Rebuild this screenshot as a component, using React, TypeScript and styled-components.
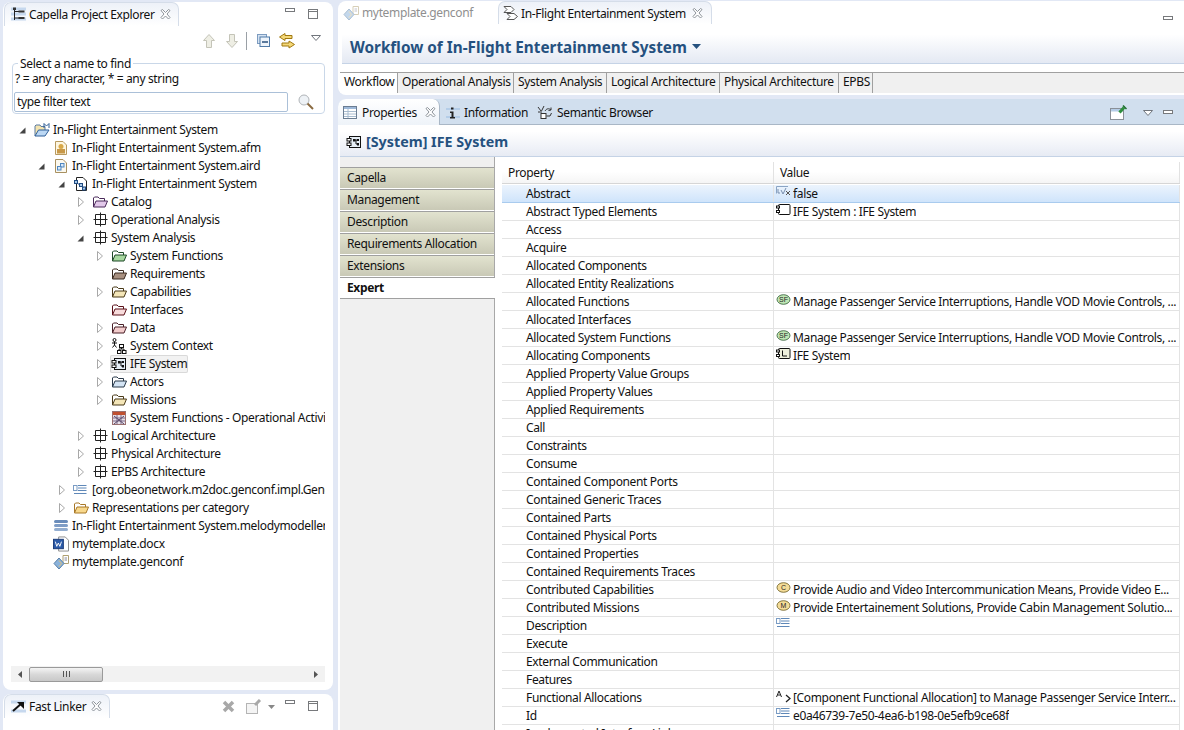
import * as React from 'react';
import styled, { createGlobalStyle } from 'styled-components';

const GlobalStyle = createGlobalStyle`
  html, body {
    margin: 0;
    padding: 0;
    height: 100%;
    overflow: hidden;
    background: #e2e8f5;
  }
  body {
    font-family: "Noto Sans", "Open Sans", sans-serif;
    font-size: 12px;
    letter-spacing: -0.35px;
    color: #111;
  }
`;

type IconName =
  | 'project' | 'afm' | 'aird' | 'model' | 'grid' | 'context' | 'comp' | 'matrix'
  | 'list' | 'stack' | 'word' | 'genconf';

interface TreeItem {
  level: number;
  arrow?: 'open' | 'closed';
  icon?: IconName;
  folder?: [string, string];
  label: string;
  selected?: boolean;
}

const PURPLE: [string, string] = ['#e2c8ea', '#4a2a5a'];
const GREEN: [string, string] = ['#a8d8a0', '#1f4a28'];
const BROWN: [string, string] = ['#a89080', '#3a2a20'];
const TAN: [string, string] = ['#f4e6b8', '#4a3a18'];
const RED: [string, string] = ['#f8dcdc', '#5a1018'];
const PINK: [string, string] = ['#f2cccc', '#4a2028'];
const BLUE: [string, string] = ['#d4e4f4', '#2a3a4a'];
const ORANGE: [string, string] = ['#f8d88c', '#a87828'];

const TREE: TreeItem[] = [
  { level: 0, arrow: 'open', icon: 'project', label: 'In-Flight Entertainment System' },
  { level: 1, icon: 'afm', label: 'In-Flight Entertainment System.afm' },
  { level: 1, arrow: 'open', icon: 'aird', label: 'In-Flight Entertainment System.aird' },
  { level: 2, arrow: 'open', icon: 'model', label: 'In-Flight Entertainment System' },
  { level: 3, arrow: 'closed', folder: PURPLE, label: 'Catalog' },
  { level: 3, arrow: 'closed', icon: 'grid', label: 'Operational Analysis' },
  { level: 3, arrow: 'open', icon: 'grid', label: 'System Analysis' },
  { level: 4, arrow: 'closed', folder: GREEN, label: 'System Functions' },
  { level: 4, folder: BROWN, label: 'Requirements' },
  { level: 4, arrow: 'closed', folder: TAN, label: 'Capabilities' },
  { level: 4, folder: RED, label: 'Interfaces' },
  { level: 4, arrow: 'closed', folder: PINK, label: 'Data' },
  { level: 4, arrow: 'closed', icon: 'context', label: 'System Context' },
  { level: 4, arrow: 'closed', icon: 'comp', label: 'IFE System', selected: true },
  { level: 4, arrow: 'closed', folder: BLUE, label: 'Actors' },
  { level: 4, arrow: 'closed', folder: TAN, label: 'Missions' },
  { level: 4, icon: 'matrix', label: 'System Functions - Operational Activities' },
  { level: 3, arrow: 'closed', icon: 'grid', label: 'Logical Architecture' },
  { level: 3, arrow: 'closed', icon: 'grid', label: 'Physical Architecture' },
  { level: 3, arrow: 'closed', icon: 'grid', label: 'EPBS Architecture' },
  { level: 2, arrow: 'closed', icon: 'list', label: '[org.obeonetwork.m2doc.genconf.impl.GenconfImpl]' },
  { level: 2, arrow: 'closed', folder: ORANGE, label: 'Representations per category' },
  { level: 1, icon: 'stack', label: 'In-Flight Entertainment System.melodymodeller' },
  { level: 1, icon: 'word', label: 'mytemplate.docx' },
  { level: 1, icon: 'genconf', label: 'mytemplate.genconf' },
];

type ValueIcon = 'bool' | 'part' | 'sf' | 'logical' | 'cap' | 'mis' | 'text' | 'alloc';

const ROWS: { name: string; icon?: ValueIcon; value?: string }[] = [
  { name: 'Abstract', icon: 'bool', value: 'false' },
  { name: 'Abstract Typed Elements', icon: 'part', value: 'IFE System : IFE System' },
  { name: 'Access' },
  { name: 'Acquire' },
  { name: 'Allocated Components' },
  { name: 'Allocated Entity Realizations' },
  { name: 'Allocated Functions', icon: 'sf', value: 'Manage Passenger Service Interruptions, Handle VOD Movie Controls, ...' },
  { name: 'Allocated Interfaces' },
  { name: 'Allocated System Functions', icon: 'sf', value: 'Manage Passenger Service Interruptions, Handle VOD Movie Controls, ...' },
  { name: 'Allocating Components', icon: 'logical', value: 'IFE System' },
  { name: 'Applied Property Value Groups' },
  { name: 'Applied Property Values' },
  { name: 'Applied Requirements' },
  { name: 'Call' },
  { name: 'Constraints' },
  { name: 'Consume' },
  { name: 'Contained Component Ports' },
  { name: 'Contained Generic Traces' },
  { name: 'Contained Parts' },
  { name: 'Contained Physical Ports' },
  { name: 'Contained Properties' },
  { name: 'Contained Requirements Traces' },
  { name: 'Contributed Capabilities', icon: 'cap', value: 'Provide Audio and Video Intercommunication Means, Provide Video E...' },
  { name: 'Contributed Missions', icon: 'mis', value: 'Provide Entertainement Solutions, Provide Cabin Management Solutio...' },
  { name: 'Description', icon: 'text' },
  { name: 'Execute' },
  { name: 'External Communication' },
  { name: 'Features' },
  { name: 'Functional Allocations', icon: 'alloc', value: '[Component Functional Allocation] to Manage Passenger Service Interr...' },
  { name: 'Id', icon: 'text', value: 'e0a46739-7e50-4ea6-b198-0e5efb9ce68f' },
  { name: 'Implemented Interface Links' },
];

const SIDE_TABS = ['Capella', 'Management', 'Description', 'Requirements Allocation', 'Extensions', 'Expert'];
const PAGE_TABS = [
  { label: 'Workflow', width: 58 },
  { label: 'Operational Analysis', width: 116 },
  { label: 'System Analysis', width: 93 },
  { label: 'Logical Architecture', width: 113 },
  { label: 'Physical Architecture', width: 119 },
  { label: 'EPBS', width: 34 },
];

function CloseIcon() {
  return (
    <svg width="11" height="11" viewBox="0 0 11 11">
      <path
        d="M1 1.500 L2.500 .5 L5.500 3.500 L8.500 .5 L10 1.500 L7 5 L10 8.500 L8.500 10 L5.500 7 L2.500 10 L1 8.500 L4 5 Z"
        fill="#fff"
        stroke="#8c9299"
        strokeWidth="1"
      />
    </svg>
  );
}

function MinIcon() {
  return (
    <svg width="10" height="5" viewBox="0 0 10 5">
      <rect x=".5" y=".5" width="9" height="3" fill="#fff" stroke="#77797c" />
    </svg>
  );
}

function MaxIcon() {
  return (
    <svg width="10" height="10" viewBox="0 0 10 10">
      <rect x=".5" y=".5" width="9" height="9" fill="#fff" stroke="#77797c" />
      <line x1="0" y1="2.500" x2="10" y2="2.500" stroke="#77797c" />
    </svg>
  );
}

function MenuTriangle() {
  return (
    <svg width="10" height="6" viewBox="0 0 10 6">
      <path d="M.5 .5 H9.500 L5 5.500 Z" fill="#fff" stroke="#70757c" />
    </svg>
  );
}

function Folder({ colors }: { colors: [string, string] }) {
  return (
    <svg width="16" height="16" viewBox="0 0 16 16">
      <path d="M1.500 13 V4 L2.500 3 H6 L7.500 4.500 H12.500 V7" fill="#fff" stroke={colors[1]} />
      <path d="M1.500 13 L4 7 H15.500 L13 13 Z" fill={colors[0]} stroke={colors[1]} strokeLinejoin="round" />
    </svg>
  );
}

function TreeIcon({ name }: { name: IconName }) {
  switch (name) {
    case 'project':
      return (
        <svg width="16" height="16" viewBox="0 0 16 16">
          <path d="M1 14 V4 L2 3 H6 L7 4.500 H11 V8" fill="#f4e4b0" stroke="#5a7aa0" />
          <path d="M1 14 L4.500 8 H15 L11 14 Z" fill="#bcd8f4" stroke="#2f5f98" />
          <path d="M10 6 V1.500 L12.500 4 L15 1.500 V6" fill="none" stroke="#2f5f98" />
        </svg>
      );
    case 'afm':
      return (
        <svg width="16" height="16" viewBox="0 0 16 16">
          <path d="M2.500 1.500 H10 L13.500 5 V14.500 H2.500 Z" fill="#fdf6e0" stroke="#b89a60" />
          <circle cx="8" cy="6.500" r="2.500" fill="#d8a848" />
          <rect x="4" y="9" width="8" height="4.500" fill="#c89848" />
        </svg>
      );
    case 'aird':
      return (
        <svg width="16" height="16" viewBox="0 0 16 16">
          <path d="M2.500 1.500 H10 L13.500 5 V14.500 H2.500 Z" fill="#fbf8ee" stroke="#a89060" />
          <rect x="7.500" y="5.500" width="3.500" height="3.500" fill="#d8e8f8" stroke="#4f86bf" />
          <rect x="4.500" y="8.500" width="3.500" height="3.500" fill="#d8e8f8" stroke="#4f86bf" />
        </svg>
      );
    case 'model':
      return (
        <svg width="16" height="16" viewBox="0 0 16 16">
          <path d="M3.500 1.500 H10 L13.500 5 V14.500 H3.500 Z" fill="#fff" stroke="#222" />
          <rect x="1.500" y="4.500" width="3" height="3" fill="#a8c8e8" stroke="#204a80" />
          <rect x="6.500" y="7.500" width="3" height="3" fill="#a8c8e8" stroke="#204a80" />
          <rect x="9.500" y="11" width="3" height="3" fill="#a8c8e8" stroke="#204a80" />
          <path d="M4 7 L7 9 M9 10 L10.500 11.500" stroke="#204a80" />
        </svg>
      );
    case 'grid':
      return (
        <svg width="16" height="16" viewBox="0 0 16 16">
          <path d="M3.500 2.500 H13.500 V12.500 H3.500 Z M8.500 .5 V14.500 M1.500 7.500 H15.500" fill="none" stroke="#222" />
        </svg>
      );
    case 'context':
      return (
        <svg width="16" height="16" viewBox="0 0 16 16">
          <circle cx="3.500" cy="2" r="1.500" fill="none" stroke="#111" />
          <path d="M1 5 H6 M3.500 3.500 V7 L1.500 9.500 M3.500 7 L5.500 9.500" fill="none" stroke="#111" />
          <rect x="8.500" y="6.500" width="4" height="3" fill="#fff" stroke="#111" />
          <rect x="6.500" y="12.500" width="3.500" height="3" fill="#fff" stroke="#111" />
          <rect x="11.500" y="12.500" width="3.500" height="3" fill="#fff" stroke="#111" />
          <path d="M10.500 9.500 V11 M8 12.500 V11 H13 V12.500" fill="none" stroke="#111" />
        </svg>
      );
    case 'comp':
      return <CompIcon />;
    case 'matrix':
      return (
        <svg width="16" height="16" viewBox="0 0 16 16">
          <rect x="1.500" y="1.500" width="13" height="13" fill="#e8e0e8" stroke="#9a7070" />
          <rect x="2" y="2" width="12" height="3" fill="#c05030" />
          <path d="M2 8 H14 M2 11 H14 M6 5 V14 M10 5 V14" stroke="#7a6a8a" />
          <path d="M3 6 L13 14 M13 6 L3 14" stroke="#5a4a6a" />
        </svg>
      );
    case 'list':
      return <TextLinesIcon />;
    case 'stack':
      return (
        <svg width="16" height="16" viewBox="0 0 16 16">
          <rect x="1" y="2" width="14" height="3" rx="1.500" fill="#6a8cba" />
          <rect x="1" y="6" width="14" height="3" rx="1.500" fill="#7f9dc6" />
          <rect x="1" y="10" width="14" height="3" rx="1.500" fill="#94aed0" />
        </svg>
      );
    case 'word':
      return (
        <svg width="17" height="16" viewBox="0 0 17 16">
          <path d="M6 .5 H13 L16.500 4 V15.500 H6 Z" fill="#fff" stroke="#8a8a8a" />
          <rect x=".5" y="3" width="10.500" height="10" fill="#2b5aa8" stroke="#1a3a78" />
          <path d="M2.500 5.500 L4 10.500 L5.700 7 L7.300 10.500 L9 5.500" fill="none" stroke="#fff" />
        </svg>
      );
    case 'genconf':
      return <GenconfIcon />;
  }
}

function CompIcon() {
  return (
    <svg width="16" height="16" viewBox="0 0 16 16">
      <rect x="3.500" y="2.500" width="11" height="11" fill="#e6eef6" stroke="#111" />
      <rect x="1" y="4.500" width="4" height="2.500" fill="#fff" stroke="#111" />
      <rect x="1" y="9" width="4" height="2.500" fill="#fff" stroke="#111" />
      <rect x="7" y="5" width="2.500" height="2.500" fill="#111" />
      <rect x="11" y="5" width="2" height="2" fill="#111" />
      <rect x="11" y="9" width="2" height="2.500" fill="#111" />
      <path d="M9 6 H11 M10 6 V10 H11" stroke="#111" fill="none" />
    </svg>
  );
}

function GenconfIcon({ muted }: { muted?: boolean }) {
  return (
    <svg width="16" height="16" viewBox="0 0 16 16" opacity={muted ? 0.5 : 1}>
      <path d="M10 1.500 H15.500 V9.500 H10 Z" fill="#fff" stroke="#b0a070" />
      <path d="M11.500 4 H14 M11.500 6 H14" stroke="#889" />
      <path d="M6 4 L11 9.500 L6 15 L1 9.500 Z" fill="#8ab2da" stroke="#5a80a8" />
      <path d="M6 6.500 L8.500 9.500 L6 12.500" fill="none" stroke="#e8c070" />
    </svg>
  );
}

function TextLinesIcon() {
  return (
    <svg width="14" height="10" viewBox="0 0 14 10">
      <rect x=".5" y=".5" width="3.500" height="5" fill="#fff" stroke="#7a9cc4" />
      <path d="M5 .5 H13.500 M5 3 H13.500 M5 5.500 H13.500 M1 8.500 H13.500" stroke="#5f88b8" />
    </svg>
  );
}

function CircleBadge({ label, fill, stroke }: { label: string; fill: string; stroke: string }) {
  return (
    <svg width="15" height="11" viewBox="0 0 15 11">
      <ellipse cx="7.500" cy="5.500" rx="6.500" ry="4.800" fill={fill} stroke={stroke} strokeWidth=".8" />
      <text x="7.500" y="8" textAnchor="middle" fontSize="7" letterSpacing="0" fontFamily="Liberation Sans" fill="#222">{label}</text>
    </svg>
  );
}

function RowIcon({ name }: { name: ValueIcon }) {
  switch (name) {
    case 'bool':
      return (
        <svg width="15" height="11" viewBox="0 0 15 11">
          <path d="M.5 7.500 V.5 H12" fill="none" stroke="#8aa4c4" />
          <path d="M2 3 V7 H4 M5 4 L7 8 L10 2" fill="none" stroke="#7a90b0" />
          <path d="M10 5 L14 9 M14 5 L10 9" stroke="#555" />
        </svg>
      );
    case 'part':
      return (
        <svg width="15" height="12" viewBox="0 0 15 12">
          <rect x="2.500" y=".5" width="11.500" height="10" rx="1" fill="#fff" stroke="#111" />
          <rect x=".5" y="2" width="3" height="2" fill="#fff" stroke="#111" />
          <rect x=".5" y="6.500" width="3" height="2" fill="#fff" stroke="#111" />
        </svg>
      );
    case 'logical':
      return (
        <svg width="15" height="12" viewBox="0 0 15 12">
          <rect x="2.500" y=".5" width="11.500" height="10" rx="1" fill="#eef0dc" stroke="#111" />
          <rect x=".5" y="2" width="3" height="2" fill="#fff" stroke="#111" />
          <rect x=".5" y="6.500" width="3" height="2" fill="#fff" stroke="#111" />
          <path d="M6.500 2.500 V8 H11" fill="none" stroke="#111" />
        </svg>
      );
    case 'sf':
      return <CircleBadge label="SF" fill="#bfe6b4" stroke="#2f5a34" />;
    case 'cap':
      return <CircleBadge label="C" fill="#f4dc98" stroke="#6a5a20" />;
    case 'mis':
      return <CircleBadge label="M" fill="#f4dc98" stroke="#6a5a20" />;
    case 'text':
      return <TextLinesIcon />;
    case 'alloc':
      return (
        <svg width="15" height="13" viewBox="0 0 15 13">
          <path d="M.5 7 L3 1 L5.500 7 M1.500 5 H4.500" fill="none" stroke="#222" />
          <path d="M10 5 L14 8.500 L10 12" fill="none" stroke="#222" strokeWidth="1.300" />
        </svg>
      );
  }
}

function TreeArrow({ kind }: { kind?: 'open' | 'closed' }) {
  if (kind === 'open') {
    return (
      <svg width="7" height="7" viewBox="0 0 7 7">
        <path d="M6.500 .5 V6.500 H.5 Z" fill="#444" />
      </svg>
    );
  }
  if (kind === 'closed') {
    return (
      <svg width="6" height="10" viewBox="0 0 6 10">
        <path d="M.5 .5 L5.500 5 L.5 9.500 Z" fill="#fff" stroke="#a8a8a8" />
      </svg>
    );
  }
  return null;
}

function App() {
  return (
    <>
      <GlobalStyle />
      <Screen>
        <LeftColumn>
          <ExplorerPanel>
            <ViewHeader>
              <ViewTab>
                <svg width="15" height="15" viewBox="0 0 15 15">
                  <path d="M0 2 H15 M0 7 H15 M0 12 H15" stroke="#c6d8ee" strokeWidth="3" />
                  <path d="M3.500 1 V13 M3.500 4.500 H8 M3.500 11 H8" stroke="#222" fill="none" />
                  <rect x="2" y=".5" width="3" height="2.500" fill="#333" />
                  <rect x="7.500" y="3.500" width="6" height="2" fill="#333" />
                  <rect x="7.500" y="10" width="6" height="2" fill="#333" />
                </svg>
                <span>Capella Project Explorer</span>
                <CloseIcon />
              </ViewTab>
              <WindowTools>
                <MinIcon />
                <MaxIcon />
              </WindowTools>
            </ViewHeader>
            <ExplorerToolbar>
              <svg width="12" height="14" viewBox="0 0 12 14">
                <path d="M6 .5 L11.500 6.500 H8.500 V13.500 H3.500 V6.500 H.5 Z" fill="#eeeee4" stroke="#c4c4b8" />
              </svg>
              <svg width="12" height="14" viewBox="0 0 12 14">
                <path d="M6 13.500 L11.500 7.500 H8.500 V.5 H3.500 V7.500 H.5 Z" fill="#eeeee4" stroke="#c4c4b8" />
              </svg>
              <ToolbarSeparator />
              <svg width="13" height="13" viewBox="0 0 13 13">
                <rect x=".5" y=".5" width="9" height="9" fill="#d4e2f2" stroke="#7d9cc0" />
                <rect x="3" y="3" width="9.500" height="9.500" fill="#eef4fb" stroke="#4f7aa8" />
                <path d="M5 8 H11" stroke="#28507c" strokeWidth="1.300" />
              </svg>
              <LinkToggle>
                <svg width="16" height="16" viewBox="0 0 16 16">
                  <path d="M6 .5 L.5 4 L6 7.500 V5.500 H13 V2.500 H6 Z" fill="#f4d878" stroke="#a07810" />
                  <path d="M10 8 L15.500 11.500 L10 15 V13 H3 V10 H10 Z" fill="#f4d878" stroke="#a07810" />
                </svg>
              </LinkToggle>
              <ToolbarMenu>
                <MenuTriangle />
              </ToolbarMenu>
            </ExplorerToolbar>
            <FindGroup>
              <FindLegend>Select a name to find</FindLegend>
              <FindHint>? = any character, * = any string</FindHint>
              <FindRow>
                <FindInput>type filter text</FindInput>
                <svg width="16" height="16" viewBox="0 0 16 16">
                  <circle cx="6" cy="6" r="5" fill="#eef2f6" stroke="#b0b4b8" />
                  <path d="M9.500 9.500 L15 15" stroke="#8a6a40" strokeWidth="2" />
                </svg>
              </FindRow>
            </FindGroup>
            <Tree>
              {TREE.map((item, i) => (
                <TreeRow key={i} $level={item.level}>
                  <ArrowSlot>
                    <TreeArrow kind={item.arrow} />
                  </ArrowSlot>
                  <TreeLabelWrap $selected={item.selected}>
                    <IconSlot>
                      {item.folder ? <Folder colors={item.folder} /> : <TreeIcon name={item.icon as IconName} />}
                    </IconSlot>
                    <TreeLabel>{item.label}</TreeLabel>
                  </TreeLabelWrap>
                </TreeRow>
              ))}
            </Tree>
            <Scrollbar>
              <ScrollEnd>
                <svg width="4" height="7" viewBox="0 0 4 7">
                  <path d="M4 0 V7 L0 3.500 Z" fill="#555" />
                </svg>
              </ScrollEnd>
              <ScrollThumb>
                <ThumbGrip />
              </ScrollThumb>
              <ScrollEnd>
                <svg width="4" height="7" viewBox="0 0 4 7">
                  <path d="M0 0 V7 L4 3.500 Z" fill="#555" />
                </svg>
              </ScrollEnd>
            </Scrollbar>
          </ExplorerPanel>
          <LinkerPanel>
            <ViewHeader>
              <ViewTab>
                <svg width="15" height="15" viewBox="0 0 15 15">
                  <path d="M0 3 H15 M0 12 H15" stroke="#c6d8ee" strokeWidth="3" />
                  <path d="M2 12 L11 4" stroke="#111" strokeWidth="2" />
                  <path d="M6 3 H13 V10 Z" fill="#111" />
                </svg>
                <span>Fast Linker</span>
                <CloseIcon />
              </ViewTab>
              <LinkerTools>
                <svg width="13" height="13" viewBox="0 0 13 13">
                  <path d="M2 2 L11 11 M11 2 L2 11" stroke="#a8a8a8" strokeWidth="3.500" />
                </svg>
                <svg width="16" height="15" viewBox="0 0 16 15">
                  <rect x=".5" y="4.500" width="11" height="10" fill="#f4f4f4" stroke="#b4b4b4" />
                  <path d="M9 6 L14 1" stroke="#a8a8a8" strokeWidth="3" />
                </svg>
                <svg width="7" height="4" viewBox="0 0 7 4">
                  <path d="M0 0 H7 L3.500 4 Z" fill="#888" />
                </svg>
              </LinkerTools>
              <WindowTools>
                <MinIcon />
                <MaxIcon />
              </WindowTools>
            </ViewHeader>
          </LinkerPanel>
        </LeftColumn>
        <RightColumn>
          <EditorPanel>
            <EditorTabs>
              <MutedTab>
                <GenconfIcon muted />
                <span>mytemplate.genconf</span>
              </MutedTab>
              <EditorTab>
                <svg width="16" height="16" viewBox="0 0 16 16">
                  <path d="M1 1.500 H8 L11 4.500 L8 7.500 H1 L4 4.500 Z" fill="#fff" stroke="#555" />
                  <path d="M4 8.500 H11 L14.500 11.500 L11 14.500 H4 L7 11.500 Z" fill="#fff" stroke="#555" />
                </svg>
                <span>In-Flight Entertainment System</span>
                <CloseIcon />
              </EditorTab>
              <EditorTools>
                <MinIcon />
              </EditorTools>
            </EditorTabs>
            <WorkflowTitle>
              <span>Workflow of In-Flight Entertainment System</span>
              <svg width="9" height="5" viewBox="0 0 9 5">
                <path d="M0 0 H9 L4.500 5 Z" fill="#26527f" />
              </svg>
            </WorkflowTitle>
            <PageTabs>
              {PAGE_TABS.map((tab, i) => (
                <PageTab key={tab.label} $active={i === 0} $width={tab.width}>{tab.label}</PageTab>
              ))}
            </PageTabs>
          </EditorPanel>
          <PropertiesPanel>
            <PropertiesTabs>
              <PropertiesTab>
                <svg width="14" height="13" viewBox="0 0 14 13">
                  <rect x=".5" y=".5" width="13" height="12" fill="#fff" stroke="#6b7d92" />
                  <rect x="1" y="1" width="12" height="2" fill="#9db8d8" />
                  <path d="M1 5.500 H13 M1 8 H13 M1 10.500 H13 M5 3 V12" stroke="#a8bcd0" />
                </svg>
                <span>Properties</span>
                <CloseIcon />
              </PropertiesTab>
              <PlainTab>
                <svg width="14" height="14" viewBox="0 0 14 14">
                  <path d="M0 3 H14 M0 11 H14" stroke="#b4cde8" strokeWidth="2" />
                  <rect x="5" y="1.500" width="2.500" height="2" fill="#222" />
                  <path d="M4 5.500 H7.500 V11 H9 V12.500 H4 V11 H5.500 V7 H4 Z" fill="#222" />
                </svg>
                <span>Information</span>
              </PlainTab>
              <PlainTab>
                <svg width="15" height="15" viewBox="0 0 15 15">
                  <path d="M1 2 L4 6 M1 7 H5 M7 1 L4.500 6" stroke="#333" fill="none" />
                  <rect x="4" y="8.500" width="5" height="5" fill="#fff" stroke="#333" />
                  <path d="M8 6 C9.500 3.500 12 3 14 5 M11.500 5.500 L14 5 L14 2.500 M9.500 11 H13 L14.500 8" stroke="#333" fill="none" />
                </svg>
                <span>Semantic Browser</span>
              </PlainTab>
              <PropertiesTools>
                <svg width="17" height="15" viewBox="0 0 17 15">
                  <rect x=".5" y="3.500" width="13" height="11" fill="#fff" stroke="#8a9098" />
                  <rect x="1" y="4" width="12" height="2.500" fill="#b4cce6" />
                  <path d="M9.500 7.500 L14 2.500" stroke="#2f8f3f" strokeWidth="3" />
                  <path d="M13 .5 L16.500 4" stroke="#1f6f2f" strokeWidth="1.500" />
                </svg>
                <TriangleGap>
                  <MenuTriangle />
                </TriangleGap>
                <MinIcon />
              </PropertiesTools>
            </PropertiesTabs>
            <PropertiesTitle>
              <CompIcon />
              <span>[System] IFE System</span>
            </PropertiesTitle>
            <PropertiesBody>
              <Sidebar>
                {SIDE_TABS.map((tab, i) => (
                  <SideTab key={tab} $active={i === SIDE_TABS.length - 1}>{tab}</SideTab>
                ))}
              </Sidebar>
              <TableArea>
                <TableHead>
                  <HeadCell>Property</HeadCell>
                  <HeadCell>Value</HeadCell>
                </TableHead>
                <HeadRule />
                {ROWS.map((row, i) => (
                  <PropertyRow key={row.name} $selected={i === 0}>
                    <NameCell>{row.name}</NameCell>
                    <ValueCell>
                      {row.icon && (
                        <ValueIconSlot>
                          <RowIcon name={row.icon} />
                        </ValueIconSlot>
                      )}
                      {row.value && <ValueText>{row.value}</ValueText>}
                    </ValueCell>
                  </PropertyRow>
                ))}
              </TableArea>
            </PropertiesBody>
          </PropertiesPanel>
        </RightColumn>
      </Screen>
    </>
  );
}

const Screen = styled.div`
  width: 1184px;
  height: 730px;
  overflow: hidden;
  display: flex;
  gap: 5px;
  background: #e2e8f5;
`;

const LeftColumn = styled.div`
  width: 330px;
  margin-left: 3px;
  padding-top: 2px;
  display: flex;
  flex-direction: column;
  gap: 4px;
  flex: none;
`;

const Panel = styled.section`
  background: #fff;
  border-radius: 8px;
  overflow: hidden;
`;

const ExplorerPanel = styled(Panel)`
  height: 688px;
  flex: none;
  display: flex;
  flex-direction: column;
`;

const LinkerPanel = styled(Panel)`
  flex: 1;
  border-bottom-left-radius: 0;
  border-bottom-right-radius: 0;
`;

const ViewHeader = styled.div`
  height: 24px;
  flex: none;
  display: flex;
  align-items: flex-start;
  padding-left: 1px;
`;

const ViewTab = styled.div`
  height: 23px;
  padding: 0 7px 0 6px;
  display: flex;
  align-items: center;
  gap: 3px;
  white-space: nowrap;
  border-radius: 7px 7px 0 0;
  border: 1px solid #d5dde9;
  border-bottom: none;
  background: linear-gradient(#edf1f8, #fff);

  svg {
    flex: none;
  }

  svg:last-child {
    margin-left: 2px;
  }
`;

const WindowTools = styled.div`
  display: flex;
  align-items: center;
  gap: 13px;
  margin-left: auto;
  margin-right: 15px;
  margin-top: 6px;
  height: 12px;

  svg:first-child {
    align-self: flex-start;
  }
`;

const LinkerTools = styled.div`
  display: flex;
  align-items: center;
  gap: 6px;
  margin-left: auto;
  margin-top: 5px;
  height: 15px;

  svg:first-child {
    margin-right: 5px;
  }

  & + ${WindowTools} {
    margin-left: 10px;
  }
`;

const ExplorerToolbar = styled.div`
  height: 37px;
  flex: none;
  display: flex;
  justify-content: flex-end;
  align-items: center;
  padding: 0 12px 8px 0;
  gap: 11px;
  box-sizing: border-box;
`;

const ToolbarSeparator = styled.span`
  width: 1px;
  height: 18px;
  margin: 0 -1px 0 -3px;
  background: #9aa0a6;
`;

const LinkToggle = styled.span`
  display: flex;
  margin-left: -2px;
`;

const ToolbarMenu = styled.span`
  display: flex;
  margin-left: 5px;
  align-self: flex-start;
  padding-top: 9px;
`;

const FindGroup = styled.fieldset`
  margin: 0 8px 0 9px;
  padding: 0 1px 2px 1px;
  height: 51px;
  flex: none;
  box-sizing: border-box;
  position: relative;
  border: 1px solid #c9d7e8;
  border-radius: 4px;
`;

const FindLegend = styled.div`
  position: absolute;
  top: -8px;
  left: 5px;
  padding: 0 2px;
  background: #fff;
  line-height: 16px;
`;

const FindHint = styled.div`
  padding: 7px 0 0 1px;
  line-height: 16px;
`;

const FindRow = styled.div`
  display: flex;
  align-items: center;
  gap: 10px;
  margin-top: 5px;
`;

const FindInput = styled.div`
  width: 274px;
  height: 20px;
  box-sizing: border-box;
  padding-left: 2px;
  border: 1px solid #abc0d8;
  border-radius: 2px;
  line-height: 18px;
`;

const Tree = styled.div`
  flex: 1;
  margin-top: 7px;
  padding-left: 13px;
  margin-right: 8px;
  overflow: hidden;
`;

const TreeRow = styled.div<{ $level: number }>`
  height: 18px;
  display: flex;
  align-items: center;
  padding-left: ${(p) => Math.round(p.$level * 19.25)}px;
  white-space: nowrap;
`;

const ArrowSlot = styled.span`
  width: 13px;
  flex: none;
  display: flex;
  justify-content: center;
`;

const TreeLabelWrap = styled.span<{ $selected?: boolean }>`
  display: flex;
  align-items: center;
  height: 18px;
  padding: 0 1px;
  margin-left: 4px;
  border-radius: 2px;
  box-sizing: border-box;
  background: ${(p) => (p.$selected ? '#f2f2f2' : 'transparent')};
  box-shadow: ${(p) => (p.$selected ? 'inset 0 0 0 1px #d9d9d9' : 'none')};
`;

const IconSlot = styled.span`
  width: 16px;
  height: 16px;
  flex: none;
  display: flex;
  align-items: center;
`;

const TreeLabel = styled.span`
  margin-left: 3px;
  line-height: 18px;
`;

const Scrollbar = styled.div`
  height: 16px;
  margin: 0 8px 8px 8px;
  flex: none;
  display: flex;
  align-items: center;
  background: #f2f2f2;
`;

const ScrollEnd = styled.span`
  width: 18px;
  flex: none;
  display: flex;
  justify-content: center;

  &:last-child {
    margin-left: auto;
  }
`;

const ScrollThumb = styled.div`
  width: 74px;
  height: 15px;
  box-sizing: border-box;
  border: 1px solid #9a9a9a;
  border-radius: 2px;
  background: linear-gradient(#f4f4f4, #d8d8d8 50%, #c8c8c8);
  display: flex;
  align-items: center;
  justify-content: center;
`;

const ThumbGrip = styled.span`
  width: 7px;
  height: 6px;
  background: repeating-linear-gradient(90deg, #555 0 1px, transparent 1px 3px);
`;

const RightColumn = styled.div`
  flex: 1;
  min-width: 0;
  padding-top: 1px;
  display: flex;
  flex-direction: column;
  gap: 4px;
`;

const EditorPanel = styled(Panel)`
  height: 94px;
  flex: none;
  border-top-right-radius: 0;
  border-bottom-right-radius: 0;
  display: flex;
  flex-direction: column;
`;

const EditorTabs = styled.div`
  height: 24px;
  flex: none;
  display: flex;
  align-items: flex-start;
  padding-left: 5px;
`;

const MutedTab = styled.div`
  width: 155px;
  height: 23px;
  display: flex;
  align-items: center;
  gap: 3px;
  color: #8f8f8f;
`;

const EditorTab = styled(ViewTab)`
  width: 214px;
  box-sizing: border-box;
  padding: 0 8px 0 4px;
  gap: 2px;

  svg:last-child {
    margin-left: auto;
  }
`;

const EditorTools = styled.div`
  margin-left: auto;
  margin-right: 11px;
  padding-top: 7px;
`;

const WorkflowTitle = styled.div`
  height: 39px;
  flex: none;
  box-sizing: border-box;
  padding: 5px 0 0 8px;
  margin-left: 4px;
  display: flex;
  align-items: center;
  gap: 5px;
  font-size: 15.3px;
  font-weight: 700;
  letter-spacing: 0;
  color: #25517f;
  background: linear-gradient(#fff 25%, #e4e9f3);
  border-bottom: 1px solid #c5d3e6;
`;

const PageTabs = styled.div`
  margin: 8px 0 0 2px;
  height: 21px;
  flex: none;
  display: flex;
  background: #f0f0f0;
  border-top: 1px solid #a0a0a0;
  box-sizing: border-box;
`;

const PageTab = styled.div<{ $active?: boolean; $width: number }>`
  width: ${(p) => p.$width}px;
  box-sizing: border-box;
  padding-left: 4px;
  line-height: 18px;
  height: 20px;
  white-space: nowrap;
  overflow: hidden;
  border-right: 1px solid #a0a0a0;
  background: ${(p) => (p.$active ? '#fff' : 'transparent')};
`;

const PropertiesPanel = styled(Panel)`
  flex: 1;
  min-height: 0;
  border-radius: 8px 0 0 0;
  display: flex;
  flex-direction: column;
`;

const PropertiesTabs = styled.div`
  height: 26px;
  flex: none;
  box-sizing: border-box;
  padding-top: 2px;
  display: flex;
  align-items: center;
  background: #d1dfee;
  border-bottom: 1px solid #a9b7c6;
`;

const PropertiesTab = styled.div`
  width: 102px;
  height: 26px;
  box-sizing: border-box;
  flex: none;
  margin-top: -2px;
  padding: 2px 0 0 5px;
  display: flex;
  align-items: center;
  gap: 5px;
  background: linear-gradient(#fff, #eef3f9);
  border-right: 1px solid #a9b7c6;
  border-radius: 7px 7px 0 0;

  svg:last-child {
    margin-left: 3px;
  }
`;

const PlainTab = styled.div`
  display: flex;
  align-items: center;
  gap: 4px;
  margin-left: 6px;

  & + & {
    margin-left: 9px;
    gap: 5px;
  }
`;

const PropertiesTools = styled.div`
  margin-left: auto;
  margin-right: 11px;
  display: flex;
  align-items: center;
`;

const TriangleGap = styled.span`
  margin: 0 10px 0 16px;
  display: flex;
`;

const PropertiesTitle = styled.div`
  height: 32px;
  flex: none;
  box-sizing: border-box;
  padding: 2px 0 0 6px;
  margin-left: 2px;
  display: flex;
  align-items: center;
  gap: 4px;
  font-size: 14.3px;
  font-weight: 700;
  letter-spacing: 0;
  color: #25517f;
  background: linear-gradient(#fff 20%, #e7ebf4);
  border-bottom: 1px solid #c5d3e6;
`;

const PropertiesBody = styled.div`
  flex: 1;
  min-height: 0;
  display: flex;
  overflow: hidden;
  margin-left: 2px;
`;

const Sidebar = styled.nav`
  width: 155px;
  flex: none;
  box-sizing: border-box;
  padding-top: 10px;
  background: #f0f0f0;
  border-right: 1px solid #a8a8a8;
`;

const SideTab = styled.div<{ $active?: boolean }>`
  height: 22px;
  box-sizing: border-box;
  padding-left: 7px;
  line-height: 19px;
  border-top: 1px solid #a0a0a0;
  border-bottom: 1px solid ${(p) => (p.$active ? '#a0a0a0' : '#fff')};
  background: ${(p) => (p.$active ? '#fff' : 'linear-gradient(#e2e3cf, #c9c9b6)')};
  font-weight: ${(p) => (p.$active ? 700 : 400)};
  margin-right: ${(p) => (p.$active ? '-1px' : '0')};
  position: relative;
`;

const TableArea = styled.div`
  width: 678px;
  flex: none;
  margin-left: 7px;
  padding-top: 5px;
`;

const TableHead = styled.div`
  height: 21px;
  display: grid;
  grid-template-columns: 272px 1fr;
  background: linear-gradient(#fff 45%, #f5f5f5);
  border-bottom: 1px solid #d6d6d6;
`;

const HeadCell = styled.div`
  padding: 3px 0 0 6px;
  line-height: 16px;
  border-right: 1px solid #e2e2e2;
`;

const HeadRule = styled.div`
  height: 1px;
`;

const PropertyRow = styled.div<{ $selected?: boolean }>`
  height: 18px;
  box-sizing: border-box;
  display: grid;
  grid-template-columns: 272px 1fr;
  border-bottom: 1px solid ${(p) => (p.$selected ? '#a9cbee' : '#e3e3e3')};
  background: ${(p) => (p.$selected ? 'linear-gradient(#ecf4fd, #cfe4fb)' : '#fff')};
  white-space: nowrap;
`;

const NameCell = styled.div`
  padding-left: 24px;
  line-height: 17px;
  border-right: 1px solid #e3e3e3;
`;

const ValueCell = styled.div`
  display: flex;
  align-items: center;
  padding-left: 2px;
  line-height: 17px;
  border-right: 1px solid #e3e3e3;
  overflow: hidden;
`;

const ValueIconSlot = styled.span`
  width: 17px;
  height: 17px;
  flex: none;
  display: flex;
  padding-top: 1px;
  box-sizing: border-box;
`;

const ValueText = styled.span`
  overflow: hidden;
`;

export default App;
